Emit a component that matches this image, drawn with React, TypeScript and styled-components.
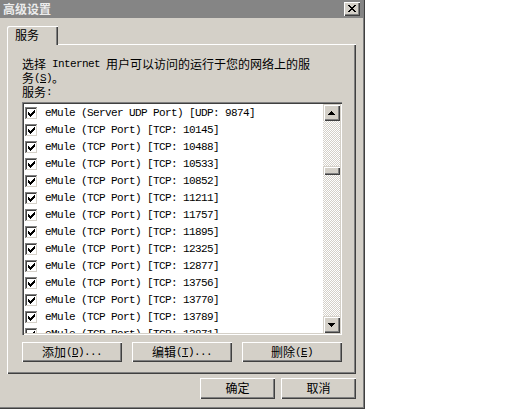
import React from "react";
import styled, { createGlobalStyle } from "styled-components";

const FACE = "#d4d0c8";
const CJK = `"Noto Sans CJK SC", "Noto Sans", sans-serif`;

const Global = createGlobalStyle`
  html, body { margin: 0; padding: 0; background: #ffffff; }
  body { font-family: ${CJK}; font-size: 12px; color: #000; }
  * { box-sizing: border-box; }
`;

const Dialog = styled.div`
  width: 365px;
  height: 409px;
  background: ${FACE};
  padding: 0 2px 2px 0;
  box-shadow: inset -1px -1px #404040, inset -2px -2px #808080;
  display: flex;
  flex-direction: column;
`;

const TitleBar = styled.div`
  height: 18px;
  background: #858585;
  display: flex;
  align-items: center;
  justify-content: space-between;
  padding: 0 3px 0 3px;
`;

const TitleText = styled.span`
  font-family: ${CJK};
  font-weight: 700;
  font-size: 12px;
  line-height: 14px;
  color: #ececec;
`;

const CloseBtn = styled.div`
  width: 16px;
  height: 14px;
  background: ${FACE};
  box-shadow: inset 1px 1px #fff, inset -1px -1px #404040, inset -2px -2px #808080;
  display: flex;
  align-items: center;
  justify-content: center;
  padding-bottom: 1px;
`;

const Body = styled.div`
  padding: 8px 7px 0 7px;
  display: flex;
  flex-direction: column;
`;

const TabStrip = styled.div`
  height: 18px;
  display: flex;
`;

const Tab = styled.div`
  position: relative;
  z-index: 1;
  width: 51px;
  height: 19px;
  background: ${FACE};
  border-top-left-radius: 2px;
  box-shadow: inset 1px 1px #fff, inset -1px 0 #404040, inset -2px 0 #808080;
  padding: 2px 0 0 8px;
  font-size: 12px;
  line-height: 14px;
`;

const Panel = styled.div`
  height: 330px;
  box-shadow: inset 1px 1px #fff, inset -1px -1px #404040, inset -2px -2px #808080;
  padding: 13px 12px 0 15px;
  display: flex;
  flex-direction: column;
`;

const Line = styled.div`
  height: 14px;
  display: flex;
  align-items: center;
  font-size: 12px;
  line-height: 14px;
  white-space: nowrap;
`;

const Lat = styled.span`
  font-family: "Liberation Mono", monospace;
  font-size: 11px;
  line-height: 14px;
  letter-spacing: -0.6px;
  white-space: pre;
`;

const U = styled.span`
  text-decoration: underline;
`;

const ListBox = styled.div`
  margin-top: 3px;
  width: 320px;
  height: 233px;
  flex: none;
  background: #fff;
  padding: 2px;
  box-shadow: inset 1px 1px #808080, inset 2px 2px #404040, inset -1px -1px #fff, inset -2px -2px ${FACE};
  display: flex;
  overflow: hidden;
`;

const Rows = styled.div`
  flex: 1;
  padding: 1px 0 0 1px;
  overflow: hidden;
`;

const Row = styled.div`
  height: 17px;
  display: flex;
  align-items: center;
  gap: 7px;
  white-space: nowrap;
`;

const RowText = styled.span`
  font-family: "Liberation Mono", monospace;
  font-size: 11px;
  letter-spacing: -0.6px;
  line-height: 17px;
`;

const ScrollBar = styled.div`
  width: 17px;
  display: flex;
  flex-direction: column;
`;

const ScrollBtn = styled.div`
  width: 17px;
  height: 17px;
  flex: none;
  background: ${FACE};
  box-shadow: inset 1px 1px ${FACE}, inset 2px 2px #fff, inset -1px -1px #404040, inset -2px -2px #808080;
  display: flex;
  align-items: center;
  justify-content: center;
`;

const Track = styled.div`
  flex: 1;
  background-color: #fff;
  background-image: conic-gradient(${FACE} 25%, #fff 0 50%, ${FACE} 0 75%, #fff 0);
  background-size: 2px 2px;
  display: flex;
  flex-direction: column;
`;

const Thumb = styled.div<{ $offset: number }>`
  margin-top: ${(p) => p.$offset}px;
  width: 17px;
  height: 9px;
  background: ${FACE};
  box-shadow: inset 1px 1px ${FACE}, inset 2px 2px #fff, inset -1px -1px #404040, inset -2px -2px #808080;
`;

const ButtonRow = styled.div`
  margin-top: 7px;
  width: 320px;
  display: flex;
  justify-content: space-between;
`;

const Button = styled.div<{ $w: number; $h: number }>`
  width: ${(p) => p.$w}px;
  height: ${(p) => p.$h}px;
  background: ${FACE};
  box-shadow: inset 1px 1px #fff, inset -1px -1px #404040, inset -2px -2px #808080;
  display: flex;
  align-items: center;
  justify-content: center;
  font-size: 12px;
  line-height: 14px;
  white-space: nowrap;
  padding-bottom: 1px;
`;

const Footer = styled.div`
  margin-top: 4px;
  display: flex;
  justify-content: flex-end;
  gap: 6px;
`;

const Pixels: React.FC<{ rows: string[]; x?: number; y?: number; color?: string }> = ({
  rows,
  x = 0,
  y = 0,
  color = "#000",
}) => (
  <>
    {rows.flatMap((r, j) =>
      r.split("").map((c, i) =>
        c === "X" ? <rect key={`${i}-${j}`} x={x + i} y={y + j} width={1} height={1} fill={color} /> : null
      )
    )}
  </>
);

const CHECK = ["......X", ".....XX", "X...XXX", "XX.XXX.", "XXXXX..", ".XXX...", "..X...."];

const CheckBox = () => (
  <svg width="13" height="13" viewBox="0 0 13 13" shapeRendering="crispEdges" style={{ flex: "none" }}>
    <rect x="0" y="0" width="13" height="13" fill="#fff" />
    <path d="M0 0h12v1H1v11H0z" fill="#808080" />
    <path d="M1 1h10v1H2v9H1z" fill="#404040" />
    <path d="M11 1h1v11H1v-1h10z" fill={FACE} />
    <Pixels rows={CHECK} x={3} y={3} />
  </svg>
);

const CloseIcon = () => (
  <svg width="8" height="7" viewBox="0 0 8 7" shapeRendering="crispEdges">
    <Pixels rows={["XX....XX", ".XX..XX.", "..XXXX..", "...XX...", "..XXXX..", ".XX..XX.", "XX....XX"]} />
  </svg>
);

const Arrow: React.FC<{ down?: boolean }> = ({ down }) => {
  const rows = ["...X...", "..XXX..", ".XXXXX.", "XXXXXXX"];
  return (
    <svg width="7" height="4" viewBox="0 0 7 4" shapeRendering="crispEdges">
      <Pixels rows={down ? [...rows].reverse() : rows} />
    </svg>
  );
};

const ports = [10145, 10488, 10533, 10852, 11211, 11757, 11895, 12325, 12877, 13756, 13770, 13789, 13871];

export default function App() {
  return (
    <>
      <Global />
      <Dialog>
        <TitleBar>
          <TitleText>高级设置</TitleText>
          <CloseBtn>
            <CloseIcon />
          </CloseBtn>
        </TitleBar>
        <Body>
          <TabStrip>
            <Tab>服务</Tab>
          </TabStrip>
          <Panel>
            <Line>
              选择<Lat> Internet </Lat>用户可以访问的运行于您的网络上的服
            </Line>
            <Line>
              务
              <Lat>
                (<U>S</U>)
              </Lat>
              。
            </Line>
            <Line>
              服务<Lat>:</Lat>
            </Line>
            <ListBox>
              <Rows>
                <Row>
                  <CheckBox />
                  <RowText>eMule (Server UDP Port) [UDP: 9874]</RowText>
                </Row>
                {ports.map((p) => (
                  <Row key={p}>
                    <CheckBox />
                    <RowText>eMule (TCP Port) [TCP: {p}]</RowText>
                  </Row>
                ))}
              </Rows>
              <ScrollBar>
                <ScrollBtn>
                  <Arrow />
                </ScrollBtn>
                <Track>
                  <Thumb $offset={45} />
                </Track>
                <ScrollBtn>
                  <Arrow down />
                </ScrollBtn>
              </ScrollBar>
            </ListBox>
            <ButtonRow>
              <Button $w={100} $h={20}>
                添加
                <Lat>
                  (<U>D</U>)...
                </Lat>
              </Button>
              <Button $w={100} $h={20}>
                编辑
                <Lat>
                  (<U>T</U>)...
                </Lat>
              </Button>
              <Button $w={100} $h={20}>
                删除
                <Lat>
                  (<U>E</U>)
                </Lat>
              </Button>
            </ButtonRow>
          </Panel>
          <Footer>
            <Button $w={75} $h={21}>确定</Button>
            <Button $w={75} $h={21}>取消</Button>
          </Footer>
        </Body>
      </Dialog>
    </>
  );
}
